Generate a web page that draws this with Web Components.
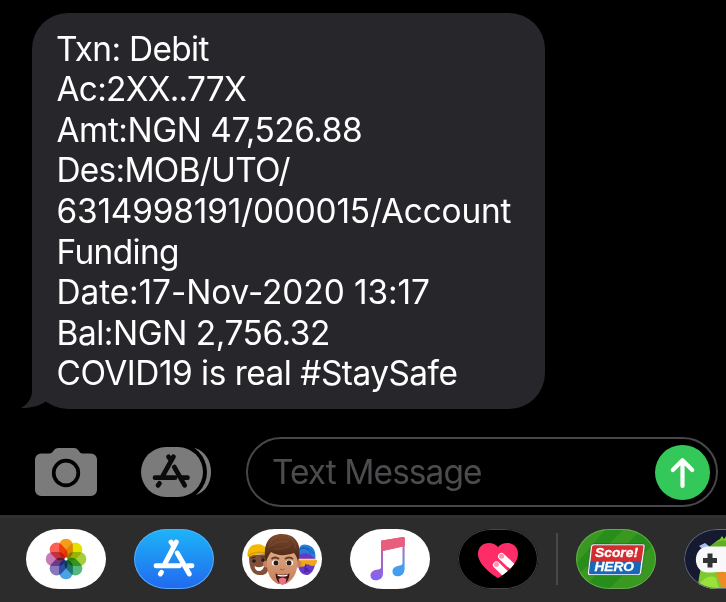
<!DOCTYPE html>
<html lang="en">
<head>
<meta charset="utf-8">
<title>Messages</title>
<style>
html,body{margin:0;background:#000;height:602px;overflow:hidden;font-family:Inter,"Liberation Sans",sans-serif;font-size:33.4px;color:#fff}
</style>
</head>
<body>
<messages-screen></messages-screen>
<script>
const define = (name, html, setup) => {
  const t = document.createElement('template');
  t.innerHTML = html;
  customElements.define(name, class extends HTMLElement {
    connectedCallback() {
      if (this.shadowRoot) return;
      this.attachShadow({mode: 'open'}).append(t.content.cloneNode(true));
      if (setup) setup(this);
    }
  });
};

/* One line of text whose ink is tracked to start at "inset" and span "ink" pixels. */
define('fit-line', `<style>:host{display:block;white-space:pre;line-height:inherit}</style><slot></slot>`, el => {
  const text = el.textContent, cs = getComputedStyle(el);
  const c = document.createElement('canvas').getContext('2d');
  c.font = cs.fontWeight + ' ' + cs.fontSize + ' ' + cs.fontFamily;
  const m = c.measureText(text);
  const ink = m.actualBoundingBoxRight + m.actualBoundingBoxLeft;
  el.style.letterSpacing = ((+el.getAttribute('ink') - ink) / (text.length - 1)).toFixed(3) + 'px';
  el.style.textIndent = (+el.getAttribute('inset') + m.actualBoundingBoxLeft).toFixed(2) + 'px';
});

define('message-bubble', `<style>
:host{display:block;position:relative;isolation:isolate;box-sizing:border-box;width:513px;height:396px;margin:13px 0 0 32px;padding:15.700px 25px 0;background:#27262b;border-radius:36px;line-height:40.6px}
svg{position:absolute;z-index:-1;left:-12px;bottom:0;display:block}
</style>
<slot></slot>
<svg width="60" height="42" viewBox="0 0 60 42"><path d="M12 0H50V41H46C39 41 32 37 26 34.5C19 39 10 41.5 1 41C8 37 12 31 12 24Z" fill="#27262b"/></svg>`);

define('camera-icon', `<style>:host{display:block;width:62px;height:48px}svg{display:block}</style>
<svg width="62" height="48" viewBox="35 448 62 48"><path d="M41 453.6H49.5C53.5 453.6 53.3 448 58.5 448H74C79 448 78.700 453.6 82.500 453.6H91A6 6 0 0 1 97 459.6V490A6 6 0 0 1 91 496H41A6 6 0 0 1 35 490V459.6A6 6 0 0 1 41 453.6Z" fill="#7b7b7b"/><circle cx="66" cy="473" r="12.300" fill="none" stroke="#000" stroke-width="3.700"/></svg>`);

define('apps-icon', `<style>:host{display:block;width:70px;height:50px}svg{display:block}</style>
<svg width="70" height="50" viewBox="141 447 70 50"><path d="M195 448C205 451 211 461 211 472S205 493 195 495Z" fill="#7b7b7b"/><rect x="137" y="443" width="70" height="58" rx="29" fill="#000"/><rect x="141" y="447" width="62" height="50" rx="25" fill="#7b7b7b"/>
<g fill="none" stroke="#0b0b0b" stroke-width="4.700" stroke-linecap="round"><path d="M173.500 456.700L162.700 476M168.500 456.700L171 460.500M174.300 467L184.700 485.400M155 477.700H175M181.500 477.700H187.500M159.500 483.300L158 485.400"/></g></svg>`);

define('send-button', `<style>:host{display:block;width:55px;height:55px;border-radius:50%;background:#34c759}svg{display:block}</style>
<svg width="55" height="55" viewBox="0 0 55 55"><path d="M27.500 41V16M17.800 25L27.500 15.300L37.200 25" fill="none" stroke="#fff" stroke-width="4.200" stroke-linecap="round" stroke-linejoin="round"/></svg>`);

define('message-field', `<style>
:host{display:flex;box-sizing:border-box;width:472px;height:70px;border:2px solid #47474a;border-radius:35px;align-items:center;justify-content:space-between;padding-right:6px;color:#4c4c4f;font-size:33.400px;line-height:40px}
</style><fit-line inset="25" ink="208">Text Message</fit-line><send-button></send-button>`);

define('message-composer', `<style>
:host{display:flex;box-sizing:border-box;height:106px;padding:28px 0 0 35px}
camera-icon{margin:11px 44px 0 0}apps-icon{margin:10px 35px 0 0}
</style><camera-icon></camera-icon><apps-icon></apps-icon><message-field></message-field>`);

define('app-pill', `<style>
:host{display:block;flex:none;width:80px;height:60px;border-radius:33px/30px;overflow:hidden;background:var(--pill,#fff);position:relative}
:host([ring])::after{content:"";position:absolute;inset:0;border:1.500px solid var(--ring);border-radius:33px/30px}
</style><slot></slot>`);

const petals = ['#f79b1c','#e4e100','#a5ce39','#55b97d','#4ba3e3','#8879bd','#c87bb8','#fa6255']
  .map((c, i) => `<rect x="33.100" y="9.800" width="13.800" height="19.500" rx="6.700" fill="${c}" style="mix-blend-mode:multiply" transform="rotate(${i * 45} 40 30)"/>`).join('');

define('app-dock', `<style>
:host{display:flex;box-sizing:border-box;height:87px;background:#2c2c2c;border-top:3px solid #303032;padding:11px 0 0 26px;overflow:hidden}
app-pill{margin-right:28px}
svg{display:block}
i{flex:none;width:2px;height:52px;margin:4px 18px 0 -10px;background:#48484a}
.store{--pill:linear-gradient(#1db4f8,#2169ee);--ring:#5ba9f2}
.touch{--pill:#000;--ring:#454547}
.hero{--pill:#278e1c;--ring:#6da653}
.games{--pill:#151a31;--ring:#656978}
</style>
<app-pill><svg width="80" height="60">${petals}<circle cx="40" cy="30" r="1.500" fill="#fff"/></svg></app-pill>
<app-pill class="store" ring><svg width="80" height="60"><path d="M42.300 13L30.500 35.500M37 13L39.500 17M43.300 24L55.300 45M22 36.700H45.500M54 36.700H58M27.500 43.300L26.300 45" fill="none" stroke="#fff" stroke-width="4.900" stroke-linecap="round"/></svg></app-pill>
<app-pill><svg width="80" height="60">
<defs><linearGradient id="hair" x2="0" y2="1"><stop stop-color="#7d4a2c"/><stop offset="1" stop-color="#432317"/></linearGradient><linearGradient id="skin" x2="0" y2="1"><stop stop-color="#dca77e"/><stop offset="1" stop-color="#c67d59"/></linearGradient></defs>
<path d="M7 26C7 42 11 46 19 46C27 46 27 40 27 25Z" fill="#805038"/><path d="M5.500 27C5 18 11 14 19 15.500L27 20V26C20 24 13 25 7 28Z" fill="#f5b900"/><path d="M6 27C12 23 19 22 26 25" stroke="#d89b00" stroke-width="1.500" fill="none"/><circle cx="12" cy="32" r="1.800" fill="#241a19"/><circle cx="21" cy="31" r="1.800" fill="#241a19"/><path d="M12.500 37Q18 40 22.500 36Q21 42 17 42T12.500 37Z" fill="#fff"/><path d="M9.500 29L13.500 28M18.500 28H23" stroke="#392521" stroke-width="1"/>
<path d="M55 23C55 41 58 46 66 46C73 43 74 34 73 24Z" fill="#6939c5"/><path d="M57 24C56 17 60 14 66 16C73 18 74 24 73 30C70 25 63 22 57 26Z" fill="#287dda"/><path d="M58 20Q67 16 72 25M60 18Q68 21 69 25" stroke="#135bb2" fill="none"/><path d="M54 30L75 31C75 38 69 38 66 35C62 39 56 38 54 35Z" fill="#f1a51b"/><path d="M56 30.500H74" stroke="#ffd56d" stroke-width="1.500"/><path d="M64 35L63 40H66M62 43Q65 41 68 42" stroke="#4320a4" stroke-width="1.300" fill="none"/>
<circle cx="24.500" cy="35" r="3.500" fill="#c48260"/><circle cx="56" cy="35" r="3.500" fill="#c48260"/><path d="M25 23C23 43 28 51 36 55H44C53 49 57 42 55 23Z" fill="url(#skin)"/>
<path d="M24 33C20 15 27 5 40 5C54 5 61 16 56 33C55.500 30 54.500 27 52 24C43 27 36 27 29 23C27 26 25 29 24 33Z" fill="url(#hair)"/><path d="M29 17Q36 11 46 13M32 20Q43 21 49 15M46 7Q53 11 54 20M27 19Q28 10 35 8" fill="none" stroke="#a26943" stroke-width=".7" opacity=".5"/>
<path d="M29.500 30Q33 27 37 30M43 30Q47 27 51 30" fill="none" stroke="#633827" stroke-width="1.800"/><ellipse cx="33.500" cy="34" rx="3.700" ry="2.800" fill="#fff"/><ellipse cx="47.500" cy="34" rx="3.700" ry="2.800" fill="#fff"/><circle cx="34" cy="34" r="2.500" fill="#291c18"/><circle cx="47" cy="34" r="2.500" fill="#291c18"/><path d="M38 40Q40 42 42.500 40" stroke="#a96245" fill="none"/><path d="M33.500 44.500Q40.500 47 47.500 44.500Q47 52 43 54H37Q34 51 33.500 44.500Z" fill="#3e1313"/><path d="M35 45.500Q41 47 46 45.500L45 47Q41 48 36 47Z" fill="#fff"/><path d="M36.500 50Q40.500 47 44.500 50L43.500 54Q40.500 58 37.500 54Z" fill="#ef7184"/></svg></app-pill>
<app-pill><svg width="80" height="60"><defs><linearGradient id="left" x2="0" y2="1"><stop stop-color="#ee5677"/><stop offset=".45" stop-color="#b067b8"/><stop offset="1" stop-color="#8062f7"/></linearGradient><linearGradient id="right" x2="0" y2="1"><stop stop-color="#ee5677"/><stop offset=".45" stop-color="#8f80cc"/><stop offset=".7" stop-color="#4d9de9"/><stop offset="1" stop-color="#399ff4"/></linearGradient></defs>
<path d="M31 12.500Q31 11.700 32 11.500L53 8Q54.600 7.700 54.600 9V17L33 22V44C33 49 30 51.300 25.500 51.300C22.500 51.300 20.500 49.500 20.500 46.500C20.500 42.500 24 41 28 40.500Q31 40.200 31 38Z" fill="url(#left)"/><path d="M52.500 9H54.600V39C54.600 44.500 52 47.300 47.500 47.300C44.500 47.300 42.500 45.500 42.500 42.500C42.500 38.800 45.500 37.200 50 36.500Q52.500 36.200 52.500 34Z" fill="url(#right)"/><path d="M31 12.500Q31 11.700 32 11.500L53 8Q54.600 7.700 54.600 9V17.300L31 22.300Z" fill="#e95d7d"/></svg></app-pill>
<app-pill class="touch" ring><svg width="80" height="60"><defs><clipPath id="heart"><path d="M40 49C33 45 20 35 20 25C20 13 34 11 40 18C46 11 60 13 60 25C60 35 47 45 40 49Z"/></clipPath></defs><path d="M40 49C33 45 20 35 20 25C20 13 34 11 40 18C46 11 60 13 60 25C60 35 47 45 40 49Z" fill="#ff2d67"/><g clip-path="url(#heart)" stroke-linecap="round"><path d="M43.500 27.500L60 43M38.500 36L54 51" stroke="#fff" stroke-width="7"/><path d="M50 39L55 43" stroke="#bd2853" stroke-width="1.300"/></g><circle cx="43.500" cy="27.300" r="2.500" fill="#ff94ad"/><circle cx="38.400" cy="35.500" r="2.500" fill="#ff94ad"/></svg></app-pill>
<i></i>
<app-pill class="hero" ring><svg width="80" height="60"><path d="M5 0H30L0 35V5ZM48 0H66L6 60H0V48ZM80 13V39L59 60H33Z" fill="#38981f"/><path d="M17.500 15H67Q69.500 15 69 18L65.500 43.500Q65 46.500 62 46.500H13.500Q11 46.500 11.500 43.500L14.500 18Q14.800 15 17.500 15Z" fill="#fff" stroke="#234c22" stroke-width=".6"/><path d="M18 16.300H66.500Q68 16.300 67.500 18L65.500 32H14.500L16 18Q16.200 16.300 18 16.300Z" fill="#d22d31"/><path d="M14.300 32H65.300L64 43Q63.700 45.200 62 45.200H14.500Q12.500 45.200 13 43Z" fill="#1968b7"/><g fill="#fff" stroke="#fff" stroke-width=".3" font-family="Liberation Sans,sans-serif" font-weight="700" font-style="italic"><text x="19" y="28.300" font-size="13" textLength="43" lengthAdjust="spacingAndGlyphs">Score!</text><text x="18.500" y="42.200" font-size="12" textLength="39.500" lengthAdjust="spacingAndGlyphs">HERO</text></g></svg></app-pill>
<app-pill class="games" ring><svg width="80" height="60"><path d="M15 17L21 14L26 18L22 23Z" fill="#a9bfe8"/><path d="M14 60C15 38 22 17 36 10L38 7L40 10L43 6V60Z" fill="#7dc92f"/><path d="M26 17Q36 10 43 12V20H27Z" fill="#5eaf22"/><path d="M14 57Q23 44 32 49L35 60H14Z" fill="#9be13b"/><path d="M24 17.500H60V43H33Q28 43.500 23 43.500C8 43 8 18 24 17.500Z" fill="#f8f8fa"/><path d="M32 45Q37 41 43 44V60H38Q35 51 32 45Z" fill="#ed8b24"/><path d="M26 24.500V38.500M19 31.500H33" stroke="#303236" stroke-width="5"/></svg></app-pill>`);

define('messages-screen', `<style>
:host{display:flex;flex-direction:column;width:726px;height:602px;overflow:hidden;background:#000}
message-bubble{flex:none}message-composer,app-dock{flex:none}
</style>
<message-bubble>
<fit-line inset="0" ink="152.500">Txn: Debit</fit-line>
<fit-line inset="-0.500" ink="189.500">Ac:2XX..77X</fit-line>
<fit-line inset="-0.500" ink="304.500">Amt:NGN 47,526.88</fit-line>
<fit-line inset="1.500" ink="232">Des:MOB/UTO/</fit-line>
<fit-line inset="0.500" ink="454">6314998191/000015/Account</fit-line>
<fit-line inset="1.500" ink="118.500">Funding</fit-line>
<fit-line inset="1.500" ink="370.500">Date:17-Nov-2020 13:17</fit-line>
<fit-line inset="1.500" ink="269.500">Bal:NGN 2,756.32</fit-line>
<fit-line inset="0.500" ink="399">COVID19 is real #StaySafe</fit-line>
</message-bubble>
<message-composer></message-composer>
<app-dock></app-dock>`);
</script>
</body>
</html>
